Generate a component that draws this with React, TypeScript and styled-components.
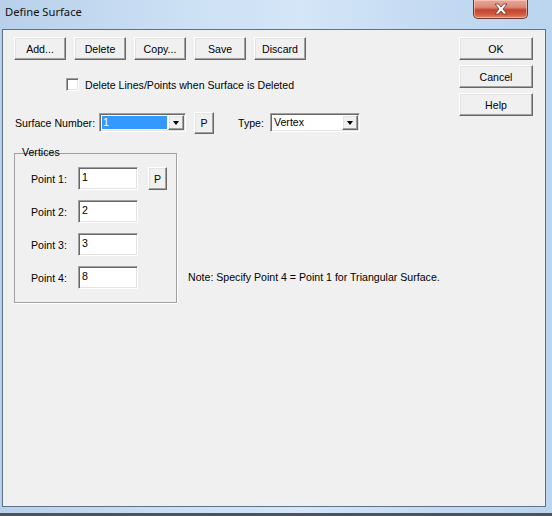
import React from 'react';
import styled, { createGlobalStyle } from 'styled-components';

const GlobalStyle = createGlobalStyle`
  html, body {
    margin: 0;
    padding: 0;
    background: #ffffff;
  }
`;

const ui = `'Liberation Sans', Arial, sans-serif`;

const points = ['1', '2', '3', '8'];

const App: React.FC = () => {
  return (
    <>
      <GlobalStyle />
      <Window>
        <TitleBar>
          <Title>Define Surface</Title>
          <CloseButton>
            <svg width="14" height="12" viewBox="0 0 14 12">
              <path
                d="M1 1 H4.5 L7 4 L9.5 1 H13 L9 6 L13 11 H9.5 L7 8 L4.5 11 H1 L5 6 Z"
                fill="#ffffff"
                stroke="#7a3a30"
                strokeWidth="0.9"
                strokeLinejoin="round"
              />
            </svg>
          </CloseButton>
        </TitleBar>
        <Client>
          <Main>
            <ButtonRow>
              <PushButton>Add...</PushButton>
              <PushButton>Delete</PushButton>
              <PushButton>Copy...</PushButton>
              <PushButton>Save</PushButton>
              <PushButton>Discard</PushButton>
            </ButtonRow>
            <CheckRow>
              <CheckBox />
              <span>Delete Lines/Points when Surface is Deleted</span>
            </CheckRow>
            <SurfaceRow>
              <Label>Surface Number:</Label>
              <Combo $width={87}>
                <ComboText $selected>1</ComboText>
                <DropButton>
                  <Arrow />
                </DropButton>
              </Combo>
              <SmallButton>P</SmallButton>
              <TypeLabel>Type:</TypeLabel>
              <Combo $width={90}>
                <ComboText>Vertex</ComboText>
                <DropButton>
                  <Arrow />
                </DropButton>
              </Combo>
            </SurfaceRow>
            <GroupRow>
              <Group>
                <Legend>Vertices</Legend>
                {points.map((v, i) => (
                  <PointRow key={i}>
                    <PointLabel>Point {i + 1}:</PointLabel>
                    <TextField>{v}</TextField>
                    {i === 0 ? <SmallButton $tall>P</SmallButton> : null}
                  </PointRow>
                ))}
              </Group>
              <Note>Note: Specify Point 4 = Point 1 for Triangular Surface.</Note>
            </GroupRow>
          </Main>
          <Side>
            <SideButton>OK</SideButton>
            <SideButton>Cancel</SideButton>
            <SideButton>Help</SideButton>
          </Side>
        </Client>
      </Window>
    </>
  );
};

export default App;

const Window = styled.div`
  width: 552px;
  height: 516px;
  box-sizing: border-box;
  display: flex;
  flex-direction: column;
  background: linear-gradient(90deg, #b8d0ea 0%, #cde1f5 35%, #d4e6f8 55%, #c2d9f1 80%, #bcd5ef 100%);
  border-bottom: 3px solid #4f5358;
  font-family: ${ui};
  font-size: 10.6px;
  color: #000;
`;

const TitleBar = styled.div`
  height: 29px;
  flex: none;
  display: flex;
  align-items: flex-start;
  padding-left: 5px;
  box-sizing: border-box;
`;

const Title = styled.div`
  font-family: 'Noto Sans', 'Open Sans', sans-serif;
  font-size: 11.2px;
  line-height: 14px;
  margin-top: 5px;
  color: #111;
`;

const CloseButton = styled.div`
  margin-left: auto;
  margin-right: 24px;
  width: 55px;
  height: 19px;
  box-sizing: border-box;
  border: 1px solid #6b3a34;
  border-top: none;
  border-radius: 0 0 5px 5px;
  background: linear-gradient(180deg, #e9a897 0%, #dc8a78 40%, #c3452f 55%, #cf5a40 80%, #e08a6a 100%);
  box-shadow: inset 0 0 0 1px rgba(255, 220, 210, 0.5);
  display: flex;
  align-items: center;
  justify-content: center;
`;

const Client = styled.div`
  flex: 1;
  margin: 0 6px 6px 2px;
  border: 1px solid #5f7287;
  background: #f0f0f0;
  display: flex;
  padding: 7px 12px 0 11px;
`;

const Main = styled.div`
  flex: 1;
  display: flex;
  flex-direction: column;
`;

const raised = `
  background: #f0f0f0;
  border-top: 1px solid #ffffff;
  border-left: 1px solid #ffffff;
  border-right: 1px solid #696969;
  border-bottom: 1px solid #696969;
  box-shadow: inset -1px -1px 0 #a0a0a0, inset 1px 1px 0 #e3e3e3;
  box-sizing: border-box;
`;

const sunken = `
  background: #ffffff;
  border-top: 1px solid #a0a0a0;
  border-left: 1px solid #a0a0a0;
  border-right: 1px solid #ffffff;
  border-bottom: 1px solid #ffffff;
  box-shadow: inset 1px 1px 0 #696969, inset -1px -1px 0 #e3e3e3;
  box-sizing: border-box;
`;

const ButtonRow = styled.div`
  display: flex;
  gap: 8px;
`;

const PushButton = styled.div`
  ${raised}
  width: 52px;
  height: 23px;
  display: flex;
  align-items: center;
  justify-content: center;
`;

const CheckRow = styled.div`
  display: flex;
  align-items: center;
  gap: 6px;
  margin-top: 18px;
  margin-left: 52px;
  height: 13px;
`;

const CheckBox = styled.div`
  ${sunken}
  width: 13px;
  height: 13px;
`;

const SurfaceRow = styled.div`
  display: flex;
  align-items: center;
  margin-top: 20px;
  height: 23px;
`;

const Label = styled.span`
  margin-left: 1px;
  width: 84px;
`;

const TypeLabel = styled.span`
  margin-left: 24px;
  width: 32px;
`;

const Combo = styled.div<{ $width: number }>`
  ${sunken}
  width: ${p => p.$width}px;
  height: 19px;
  display: flex;
  align-items: stretch;
  padding: 2px;
`;

const ComboText = styled.div<{ $selected?: boolean }>`
  flex: 1;
  margin-right: 1px;
  padding-left: 1px;
  line-height: 13px;
  background: ${p => (p.$selected ? '#3399ff' : 'transparent')};
  color: ${p => (p.$selected ? '#ffffff' : '#000000')};
`;

const DropButton = styled.div`
  ${raised}
  width: 16px;
  margin: -1px -1px -1px 0;
  display: flex;
  align-items: center;
  justify-content: center;
`;

const Arrow = styled.div`
  width: 0;
  height: 0;
  border-left: 3.5px solid transparent;
  border-right: 3.5px solid transparent;
  border-top: 4px solid #000;
  margin-top: 1px;
`;

const SmallButton = styled.div<{ $tall?: boolean }>`
  ${raised}
  width: ${p => (p.$tall ? 19 : 20)}px;
  height: ${p => (p.$tall ? 23 : 22)}px;
  margin-left: ${p => (p.$tall ? 10 : 8)}px;
  display: flex;
  align-items: center;
  justify-content: center;
`;

const GroupRow = styled.div`
  display: flex;
  align-items: flex-end;
  gap: 11px;
  margin-top: 12px;
`;

const Group = styled.fieldset`
  margin: 0;
  width: 163px;
  height: 157px;
  box-sizing: border-box;
  border: none;
  box-shadow: inset 1px 1px 0 #a0a0a0, inset -1px -1px 0 #a0a0a0, 1px 1px 0 #ffffff;
  padding: 8px 0 0 16px;
  display: flex;
  flex-direction: column;
  gap: 10px;
`;

const Legend = styled.legend`
  padding: 0 1px;
  margin-left: -9px;
  line-height: 13px;
`;

const PointRow = styled.div`
  display: flex;
  align-items: center;
  height: 23px;
`;

const PointLabel = styled.span`
  margin-left: 1px;
  width: 47px;
`;

const TextField = styled.div`
  ${sunken}
  width: 60px;
  height: 23px;
  padding: 3px 0 0 3px;
  line-height: 13px;
`;

const Note = styled.div`
  margin-bottom: 19px;
  line-height: 13px;
`;

const Side = styled.div`
  width: 74px;
  display: flex;
  flex-direction: column;
  gap: 5px;
`;

const SideButton = styled.div`
  ${raised}
  height: 23px;
  display: flex;
  align-items: center;
  justify-content: center;
`;
